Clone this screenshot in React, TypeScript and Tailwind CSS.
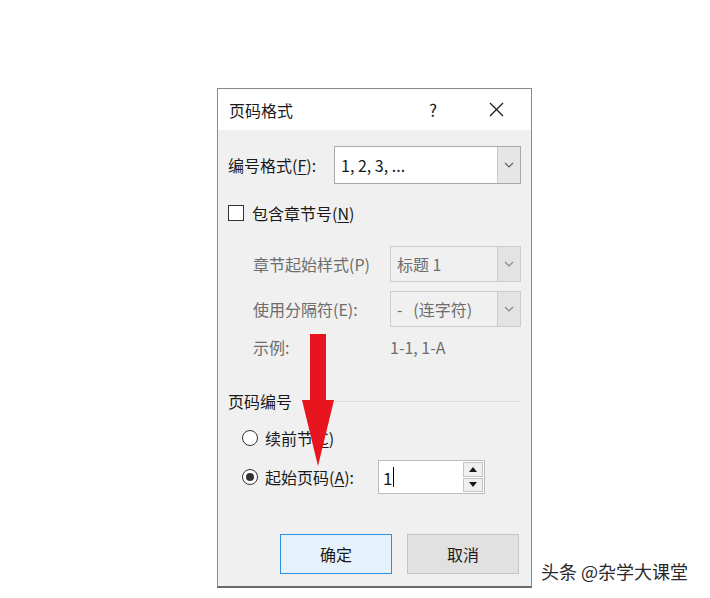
import React from 'react';

// Small chevron used in the combo boxes
function Chevron({ color = '#606060' }: { color?: string }) {
  return (
    <svg width="10" height="6" viewBox="0 0 10 6" fill="none" stroke={color} strokeWidth="1.2">
      <polyline points="1 1 5 5 9 1" />
    </svg>
  );
}

function Combo({
  value,
  width,
  height,
  disabled = false,
}: {
  value: string;
  width: string;
  height: string;
  disabled?: boolean;
}) {
  return (
    <div
      className={`flex ${width} ${height} border ${
        disabled ? 'border-[#cccccc] bg-[#f0f0f0] text-[#6d6d6d]' : 'border-[#a8a8a8] bg-white text-[#1a1a1a]'
      }`}
    >
      <div className="flex-1 flex items-center pl-[6px] text-[16px] leading-none whitespace-pre">{value}</div>
      <div
        className={`w-[23px] flex items-center justify-center border-l ${
          disabled ? 'border-[#cccccc] bg-[#e3e3e3]' : 'border-[#c8c8c8] bg-[#e6e6e6]'
        }`}
      >
        <Chevron color={disabled ? '#8a8a8a' : '#606060'} />
      </div>
    </div>
  );
}

export default function App() {
  return (
    <div className="relative w-[710px] h-[598px] bg-white overflow-hidden font-['Microsoft_YaHei','Noto_Sans_CJK_SC',sans-serif] text-[#1a1a1a]">
      <div className="pt-[88px] pl-[217px]">
        <div className="w-[315px] h-[500px] border border-[#8a8a8a] border-b-2 border-b-[#6a6a6a] bg-[#f0f0f0] flex flex-col">
          {/* Title bar */}
          <div className="h-[41px] bg-white flex items-center pl-[11px] pr-[27px]">
            <span className="text-[16px] leading-none flex-1">页码格式</span>
            <span className="text-[17px] leading-none mr-[52px]">?</span>
            <svg width="15" height="15" viewBox="0 0 15 15" stroke="#1a1a1a" strokeWidth="1.2">
              <line x1="1" y1="1" x2="14" y2="14" />
              <line x1="14" y1="1" x2="1" y2="14" />
            </svg>
          </div>

          {/* Body */}
          <div className="pl-[10px] pt-[16px] text-[16px] leading-none">
            <div className="flex items-center h-[38px]">
              <span className="w-[106px]">
                编号格式(<span className="underline underline-offset-2">F</span>):
              </span>
              <Combo value="1, 2, 3, ..." width="w-[187px]" height="h-[38px]" />
            </div>

            <div className="flex items-center h-[20px] mt-[19px]">
              <div className="w-[16px] h-[16px] border border-[#333333] bg-white mr-[8px]" />
              <span>
                包含章节号(<span className="underline underline-offset-2">N</span>)
              </span>
            </div>

            <div className="flex items-center h-[36px] mt-[23px] pl-[25px] text-[#6d6d6d]">
              <span className="w-[137px]">章节起始样式(P)</span>
              <Combo value="标题 1" width="w-[131px]" height="h-[36px]" disabled />
            </div>

            <div className="flex items-center h-[36px] mt-[9px] pl-[25px] text-[#6d6d6d]">
              <span className="w-[137px]">使用分隔符(E):</span>
              <Combo value="-   (连字符)" width="w-[131px]" height="h-[36px]" disabled />
            </div>

            <div className="flex items-center h-[20px] mt-[10px] pl-[25px] text-[#6d6d6d]">
              <span className="w-[137px]">示例:</span>
              <span>1-1, 1-A</span>
            </div>

            <div className="flex items-center h-[20px] mt-[34px] pr-[10px]">
              <span className="mr-[10px]">页码编号</span>
              <div className="flex-1 h-px bg-[#dadada]" />
            </div>

            <div className="flex items-center h-[20px] mt-[17px] pl-[14px]">
              <div className="w-[16px] h-[16px] rounded-full border border-[#333333] bg-white mr-[7px]" />
              <span>
                续前节(<span className="underline underline-offset-2">C</span>)
              </span>
            </div>

            <div className="flex items-center h-[34px] mt-[12px] pl-[14px]">
              <div className="w-[16px] h-[16px] rounded-full border border-[#333333] bg-white mr-[7px] flex items-center justify-center">
                <div className="w-[8px] h-[8px] rounded-full bg-[#333333]" />
              </div>
              <span className="w-[113px]">
                起始页码(<span className="underline underline-offset-2">A</span>):
              </span>
              <div className="flex h-[34px] w-[107px] border border-[#bcbcbc] bg-white">
                <div className="flex-1 flex items-center pl-[4px]">
                  <span className="text-[17px]">1</span>
                  <span className="w-px h-[20px] bg-black ml-[1px]" />
                </div>
                <div className="w-[22px] flex flex-col gap-[1px] p-[1px]">
                  <div className="flex-1 flex items-center justify-center bg-[#efefef] border border-[#c4c4c4]">
                    <svg width="8" height="5" viewBox="0 0 8 5">
                      <polygon points="0 5 4 0 8 5" fill="#1a1a1a" />
                    </svg>
                  </div>
                  <div className="flex-1 flex items-center justify-center bg-[#efefef] border border-[#c4c4c4]">
                    <svg width="8" height="5" viewBox="0 0 8 5">
                      <polygon points="0 0 8 0 4 5" fill="#1a1a1a" />
                    </svg>
                  </div>
                </div>
              </div>
            </div>

            <div className="flex mt-[40px] pl-[52px] gap-[15px]">
              <div className="w-[112px] h-[40px] border border-[#2f8de4] bg-[#e5f1fb] flex items-center justify-center">
                确定
              </div>
              <div className="w-[112px] h-[40px] border border-[#c4c4c4] bg-[#e1e1e1] flex items-center justify-center">
                取消
              </div>
            </div>
          </div>
        </div>
      </div>

      {/* Red annotation arrow */}
      <svg className="absolute left-[300px] top-[334px]" width="36" height="136" viewBox="0 0 36 136">
        <polygon points="10 0 26 0 26 66 34 66 18 132 2 66 10 66" fill="#e8141e" />
      </svg>

      {/* Watermark */}
      <div className="absolute left-[541px] top-[562px] text-[18px] leading-none text-[#2a2a2a] [text-shadow:0_0_2px_#fff,0_0_2px_#fff]">
        头条 @杂学大课堂
      </div>
    </div>
  );
}
